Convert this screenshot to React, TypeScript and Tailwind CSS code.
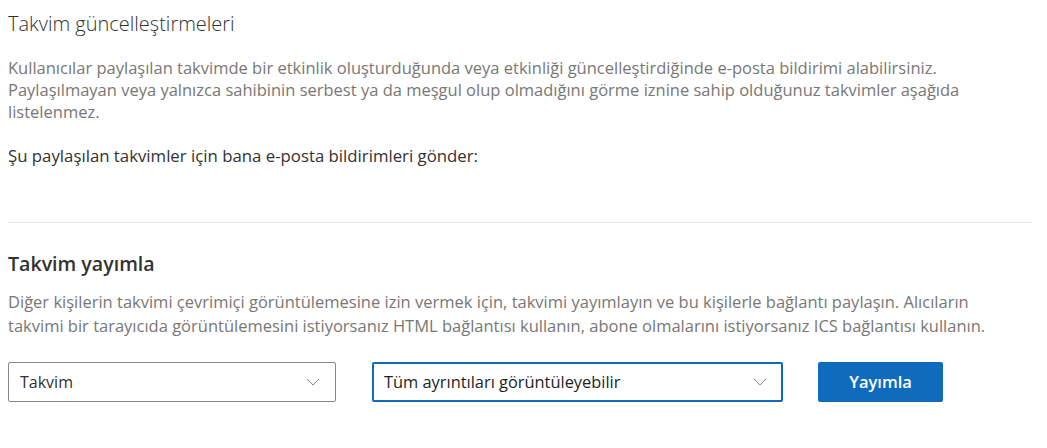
import React from "react";

function Chevron() {
  return (
    <svg width="14" height="8" viewBox="0 0 14 8" fill="none" className="shrink-0">
      <path d="M1 1 L7 7 L13 1" stroke="#8a8886" strokeWidth="1" />
    </svg>
  );
}

export default function App() {
  return (
    <div
      className="w-[1047px] h-[448px] bg-white overflow-hidden"
      style={{ fontFamily: '"Open Sans", "Noto Sans", sans-serif' }}
    >
      <div className="pl-[8px] pr-[15px] pt-[12px]">
        <h2 className="text-[20px] leading-[24px] font-light text-[#323130]">Takvim güncelleştirmeleri</h2>
        <p className="mt-[21px] text-[16.5px] leading-[22px] text-[#797775] whitespace-nowrap">
          Kullanıcılar paylaşılan takvimde bir etkinlik oluşturduğunda veya etkinliği güncelleştirdiğinde e-posta bildirimi alabilirsiniz.
          <br />
          Paylaşılmayan veya yalnızca sahibinin serbest ya da meşgul olup olmadığını görme iznine sahip olduğunuz takvimler aşağıda
          <br />
          listelenmez.
        </p>
        <p className="mt-[22px] text-[16.8px] leading-[22px] text-[#323130]">
          Şu paylaşılan takvimler için bana e-posta bildirimleri gönder:
        </p>
        <div className="mt-[55px] h-px bg-[#edebe9]" />
        <h2 className="mt-[27px] text-[19.6px] leading-[28px] font-semibold text-[#323130]">Takvim yayımla</h2>
        <p className="mt-[12px] text-[16.5px] leading-[24px] text-[#797775] whitespace-nowrap">
          Diğer kişilerin takvimi çevrimiçi görüntülemesine izin vermek için, takvimi yayımlayın ve bu kişilerle bağlantı paylaşın. Alıcıların
          <br />
          takvimi bir tarayıcıda görüntülemesini istiyorsanız HTML bağlantısı kullanın, abone olmalarını istiyorsanız ICS bağlantısı kullanın.
        </p>
        <div className="mt-[24px] flex items-center">
          <div className="w-[328px] h-[40px] border border-[#8a8886] rounded-[2px] flex items-center justify-between pl-[11px] pr-[15px]">
            <span className="text-[16px] text-[#323130]">Takvim</span>
            <Chevron />
          </div>
          <div className="ml-[36px] w-[411px] h-[40px] border-2 border-[#0f6cbd] rounded-[2px] flex items-center justify-between pl-[10px] pr-[14px]">
            <span className="text-[16.4px] text-[#201f1e]">Tüm ayrıntıları görüntüleyebilir</span>
            <Chevron />
          </div>
          <button className="ml-[35px] w-[125px] h-[40px] bg-[#0f6cbd] rounded-[2px] text-white text-[16.5px] font-semibold">
            Yayımla
          </button>
        </div>
      </div>
    </div>
  );
}
